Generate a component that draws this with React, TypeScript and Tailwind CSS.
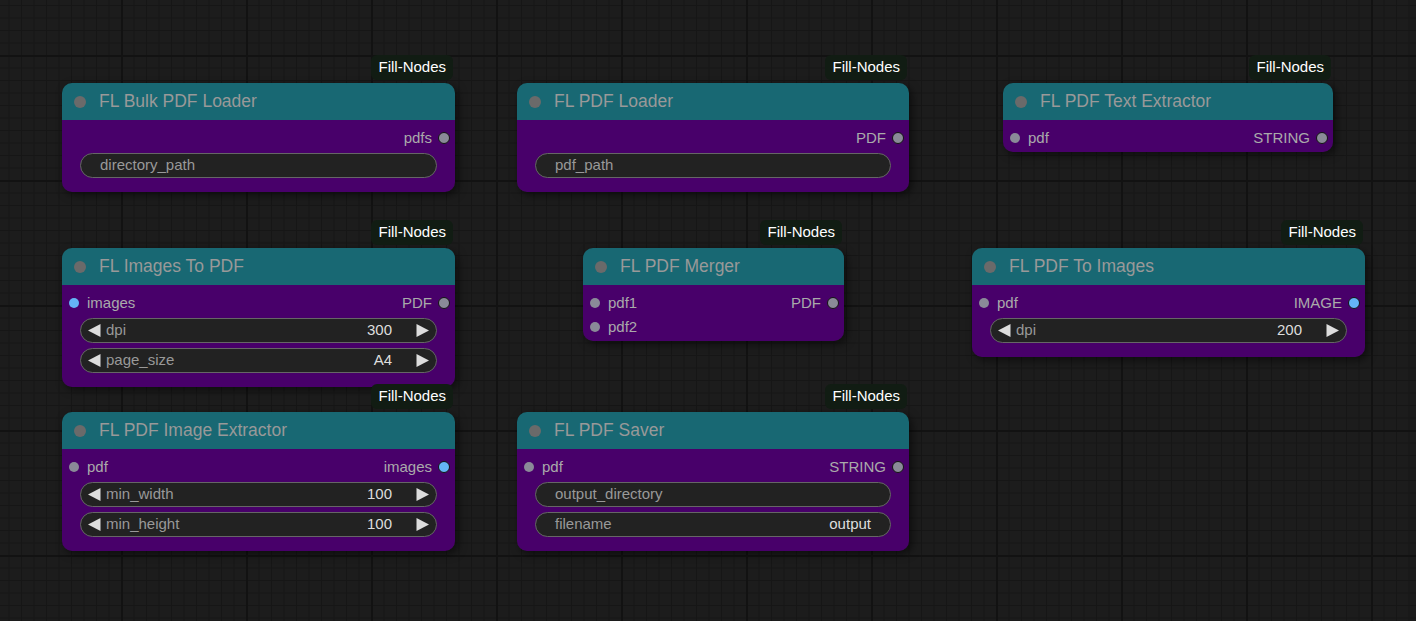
import React from "react";

type SlotKind = "image" | "plain";
type Slot = { name: string; kind?: SlotKind };
type Widget = { kind: "text" | "number"; label: string; value?: string };
type GraphNode = {
  id: string;
  title: string;
  x: number;
  y: number;
  w: number;
  inputs: Slot[];
  outputs: Slot[];
  widgets: Widget[];
};

const NODES: GraphNode[] = [
  {
    id: "bulk",
    title: "FL Bulk PDF Loader",
    x: 62,
    y: 83,
    w: 393,
    inputs: [],
    outputs: [{ name: "pdfs" }],
    widgets: [{ kind: "text", label: "directory_path" }],
  },
  {
    id: "loader",
    title: "FL PDF Loader",
    x: 517,
    y: 83,
    w: 392,
    inputs: [],
    outputs: [{ name: "PDF" }],
    widgets: [{ kind: "text", label: "pdf_path" }],
  },
  {
    id: "text",
    title: "FL PDF Text Extractor",
    x: 1003,
    y: 83,
    w: 330,
    inputs: [{ name: "pdf" }],
    outputs: [{ name: "STRING" }],
    widgets: [],
  },
  {
    id: "img2pdf",
    title: "FL Images To PDF",
    x: 62,
    y: 248,
    w: 393,
    inputs: [{ name: "images", kind: "image" }],
    outputs: [{ name: "PDF" }],
    widgets: [
      { kind: "number", label: "dpi", value: "300" },
      { kind: "number", label: "page_size", value: "A4" },
    ],
  },
  {
    id: "merger",
    title: "FL PDF Merger",
    x: 583,
    y: 248,
    w: 261,
    inputs: [{ name: "pdf1" }, { name: "pdf2" }],
    outputs: [{ name: "PDF" }],
    widgets: [],
  },
  {
    id: "pdf2img",
    title: "FL PDF To Images",
    x: 972,
    y: 248,
    w: 393,
    inputs: [{ name: "pdf" }],
    outputs: [{ name: "IMAGE", kind: "image" }],
    widgets: [{ kind: "number", label: "dpi", value: "200" }],
  },
  {
    id: "imgext",
    title: "FL PDF Image Extractor",
    x: 62,
    y: 412,
    w: 393,
    inputs: [{ name: "pdf" }],
    outputs: [{ name: "images", kind: "image" }],
    widgets: [
      { kind: "number", label: "min_width", value: "100" },
      { kind: "number", label: "min_height", value: "100" },
    ],
  },
  {
    id: "saver",
    title: "FL PDF Saver",
    x: 517,
    y: 412,
    w: 392,
    inputs: [{ name: "pdf" }],
    outputs: [{ name: "STRING" }],
    widgets: [
      { kind: "text", label: "output_directory" },
      { kind: "text", label: "filename", value: "output" },
    ],
  },
];

function Dot({ kind, output }: { kind?: SlotKind; output?: boolean }) {
  const color = kind === "image" ? "bg-[#64b5f6]" : "bg-[#8a8a98]";
  return (
    <span
      className={`block shrink-0 rounded-full ${color} ${
        output ? "h-[12px] w-[12px] border-[1.5px] border-[#141414]" : "h-[10px] w-[10px]"
      }`}
    />
  );
}

function Arrow({ dir }: { dir: "left" | "right" }) {
  return (
    <svg width="13" height="13" viewBox="0 0 13 13" className="shrink-0">
      {dir === "left" ? (
        <polygon points="12.5,0 0,6.5 12.5,13" fill="#dddddd" />
      ) : (
        <polygon points="0.5,0 13,6.5 0.5,13" fill="#dddddd" />
      )}
    </svg>
  );
}

function WidgetRow({ widget }: { widget: Widget }) {
  if (widget.kind === "number") {
    return (
      <div className="mx-[18px] flex h-[25px] items-center rounded-full border border-[#666] bg-[#222] pl-[7px] pr-[7px]">
        <Arrow dir="left" />
        <span className="ml-[5px] flex-1 text-[#999]">{widget.label}</span>
        <span className="text-[#ddd]">{widget.value}</span>
        <span className="ml-[24px]">
          <Arrow dir="right" />
        </span>
      </div>
    );
  }
  return (
    <div className="mx-[18px] flex h-[25px] items-center justify-between rounded-full border border-[#666] bg-[#222] px-[19px]">
      <span className="text-[#999]">{widget.label}</span>
      {widget.value && <span className="text-[#ddd]">{widget.value}</span>}
    </div>
  );
}

function NodeCard({ node }: { node: GraphNode }) {
  const rows = Math.max(node.inputs.length, node.outputs.length);
  return (
    <div
      className="absolute"
      style={{ left: node.x, top: node.y, width: node.w }}
    >
      <div className="absolute bottom-[calc(100%+3px)] right-[2px] flex h-[25px] items-center rounded-[6px] bg-[#111c13] px-[7px] text-[15px] text-white">
        Fill-Nodes
      </div>
      <div className="overflow-hidden rounded-[10px] shadow-[3px_3px_8px_rgba(0,0,0,0.55)]">
        <div className="flex h-[37px] items-center bg-[#186873] pl-[12px]">
          <span className="block h-[12px] w-[12px] rounded-full bg-[#6a6a6a]" />
          <span className="ml-[13px] text-[17.5px] text-[#999]">{node.title}</span>
        </div>
        <div
          className={`bg-[#48006a] pt-[6px] ${node.widgets.length ? "pb-[14px]" : "pb-[2px]"}`}
        >
          {Array.from({ length: rows }).map((_, i) => {
            const input = node.inputs[i];
            const output = node.outputs[i];
            return (
              <div key={i} className="flex h-[24px] items-center justify-between text-[15px] text-[#aaa]">
                <div className="flex items-center gap-[8px] pl-[7px]">
                  {input && (
                    <>
                      <Dot kind={input.kind} />
                      <span>{input.name}</span>
                    </>
                  )}
                </div>
                <div className="flex items-center gap-[6px] pr-[5px]">
                  {output && (
                    <>
                      <span>{output.name}</span>
                      <Dot kind={output.kind} output />
                    </>
                  )}
                </div>
              </div>
            );
          })}
          {node.widgets.length > 0 && (
            <div className="mt-[3px] flex flex-col gap-[5px] text-[15px]">
              {node.widgets.map((widget) => (
                <WidgetRow key={widget.label} widget={widget} />
              ))}
            </div>
          )}
        </div>
      </div>
    </div>
  );
}

export default function App() {
  return (
    <div className="relative h-screen w-full overflow-hidden bg-[#1c1c1c] bg-[linear-gradient(to_right,#121212_2px,transparent_2px),linear-gradient(to_bottom,#121212_2px,transparent_2px),linear-gradient(to_right,#161616_1px,transparent_1px),linear-gradient(to_bottom,#161616_1px,transparent_1px)] bg-[length:125px_125px,125px_125px,12.5px_12.5px,12.5px_12.5px] bg-[position:121px_55px,121px_55px,121px_55px,121px_55px] font-['Liberation_Sans',Arial,sans-serif]">
      {NODES.map((node) => (
        <NodeCard key={node.id} node={node} />
      ))}
    </div>
  );
}
